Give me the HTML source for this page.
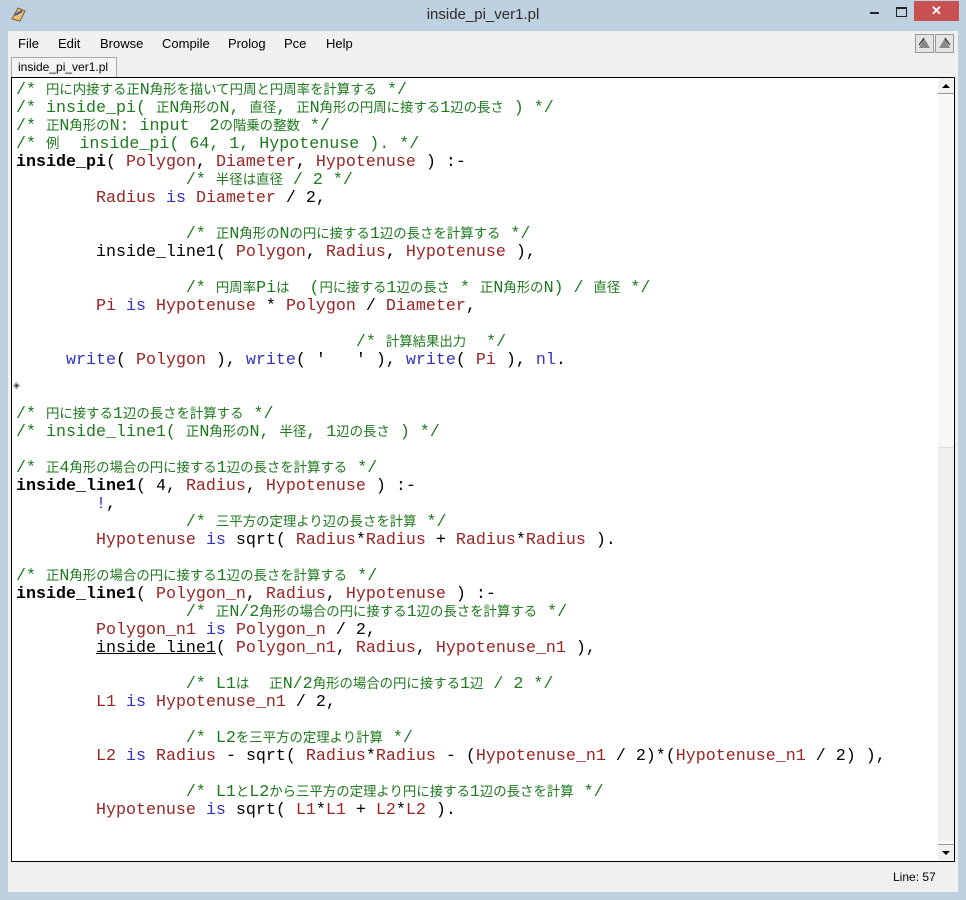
<!DOCTYPE html>
<html><head><meta charset="utf-8">
<style>
body{margin:0;width:966px;height:900px;background:#bfd0e1;position:relative;overflow:hidden;font-family:"Liberation Sans","Noto Sans CJK JP",sans-serif}
.title{position:absolute;left:0;top:6px;width:966px;text-align:center;font-size:15px;color:#2b2b2b}
.client{position:absolute;left:8px;top:31px;width:950px;height:861px;background:#f0f0f0}
.menu{position:absolute;left:8px;top:36px;font-size:13px;color:#000}
.menu span{position:absolute;white-space:nowrap}
.tab{position:absolute;left:11px;top:57px;width:106px;height:20px;border:1px solid #aaa;border-bottom:none;background:#f4f4f4;font-size:12px;line-height:19px;padding-left:6px;box-sizing:border-box}
.ed{position:absolute;left:11px;top:77px;width:944px;height:785px;border:1px solid #000;box-sizing:border-box;background:#fff;overflow:hidden}
.code{position:absolute;left:4px;top:4px;font-family:"Liberation Mono","Noto Sans CJK JP",monospace;font-size:16.67px;line-height:18px;color:#000}
.code div{height:18px;white-space:pre;overflow:visible}
i{font-style:normal;font-family:"Noto Sans CJK JP",sans-serif;font-size:13.4px;line-height:0}
.c{color:#1f7a1f}.v{color:#9a2424}.b{color:#3333bb}.h{font-weight:bold}
.sb{position:absolute;left:926px;top:0;width:16px;height:783px;background:#f7f7f7}
.btn{position:absolute;left:0;width:16px;height:16px;background:#f0f0f0;border-bottom:1px solid #999;box-sizing:border-box}
.thumb{position:absolute;left:0;top:369px;width:16px;height:393px;background:#efefef;border-top:1px solid #ddd}
</style></head><body>
<svg style="position:absolute;left:10px;top:5px" width="18" height="18" viewBox="0 0 18 18"><path d="M2 14 L8 3 L15 6 L10 16 Z" fill="#e8c070" stroke="#806030"/><path d="M5 10 L12 6" stroke="#4050a0" stroke-width="2"/></svg>
<div class="title">inside_pi_ver1.pl</div>
<div style="position:absolute;left:870px;top:12px;width:9px;height:2px;background:#222"></div>
<div style="position:absolute;left:896px;top:7px;width:9px;height:7px;border:1px solid #222;border-top-width:2px"></div>
<div style="position:absolute;left:914px;top:1px;width:45px;height:20px;background:#c75050;color:#fff;text-align:center;font-size:13px;line-height:20px;font-weight:bold">✕</div>
<div class="client"></div>
<div class="menu"><span style="left:10px">File</span><span style="left:50px">Edit</span><span style="left:92px">Browse</span><span style="left:154px">Compile</span><span style="left:220px">Prolog</span><span style="left:276px">Pce</span><span style="left:318px">Help</span></div>
<div style="position:absolute;left:915px;top:34px;width:19px;height:19px;background:#e4e4e4;border:1px solid #999;box-sizing:border-box"><svg width="17" height="17"><path d="M3 13 L8 3 L14 13 Z" fill="#888"/><path d="M3 10 L8 3" stroke="#111"/></svg></div>
<div style="position:absolute;left:935px;top:34px;width:19px;height:19px;background:#e4e4e4;border:1px solid #999;box-sizing:border-box"><svg width="17" height="17"><path d="M3 13 L9 3 L14 13 Z" fill="#888"/><path d="M9 3 L14 10" stroke="#111"/></svg></div>
<div class="tab">inside_pi_ver1.pl</div>
<div class="ed">
<div class="code">
<div><span class="c">/* <i>円に内接する正</i>N<i>角形を描いて円周と円周率を計算する</i> */</span></div>
<div><span class="c">/* inside_pi( <i>正</i>N<i>角形の</i>N, <i>直径</i>, <i>正</i>N<i>角形の円周に接する</i>1<i>辺の長さ</i> ) */</span></div>
<div><span class="c">/* <i>正</i>N<i>角形の</i>N: input  2<i>の階乗の整数</i> */</span></div>
<div><span class="c">/* <i>例</i>  inside_pi( 64, 1, Hypotenuse ). */</span></div>
<div><span class="h">inside_pi</span>( <span class="v">Polygon</span>, <span class="v">Diameter</span>, <span class="v">Hypotenuse</span> ) :-</div>
<div>                 <span class="c">/* <i>半径は直径</i> / 2 */</span></div>
<div>        <span class="v">Radius</span> <span class="b">is</span> <span class="v">Diameter</span> / 2,</div>
<div></div>
<div>                 <span class="c">/* <i>正</i>N<i>角形の</i>N<i>の円に接する</i>1<i>辺の長さを計算する</i> */</span></div>
<div>        inside_line1( <span class="v">Polygon</span>, <span class="v">Radius</span>, <span class="v">Hypotenuse</span> ),</div>
<div></div>
<div>                 <span class="c">/* <i>円周率</i>Pi<i>は</i>  (<i>円に接する</i>1<i>辺の長さ</i> * <i>正</i>N<i>角形の</i>N) / <i>直径</i> */</span></div>
<div>        <span class="v">Pi</span> <span class="b">is</span> <span class="v">Hypotenuse</span> * <span class="v">Polygon</span> / <span class="v">Diameter</span>,</div>
<div></div>
<div>                                  <span class="c">/* <i>計算結果出力</i>  */</span></div>
<div>     <span class="b">write</span>( <span class="v">Polygon</span> ), <span class="b">write</span>( '   ' ), <span class="b">write</span>( <span class="v">Pi</span> ), <span class="b">nl</span>.</div>
<div></div>
<div></div>
<div><span class="c">/* <i>円に接する</i>1<i>辺の長さを計算する</i> */</span></div>
<div><span class="c">/* inside_line1( <i>正</i>N<i>角形の</i>N, <i>半径</i>, 1<i>辺の長さ</i> ) */</span></div>
<div></div>
<div><span class="c">/* <i>正</i>4<i>角形の場合の円に接する</i>1<i>辺の長さを計算する</i> */</span></div>
<div><span class="h">inside_line1</span>( 4, <span class="v">Radius</span>, <span class="v">Hypotenuse</span> ) :-</div>
<div>        <span class="b">!</span>,</div>
<div>                 <span class="c">/* <i>三平方の定理より辺の長さを計算</i> */</span></div>
<div>        <span class="v">Hypotenuse</span> <span class="b">is</span> sqrt( <span class="v">Radius</span>*<span class="v">Radius</span> + <span class="v">Radius</span>*<span class="v">Radius</span> ).</div>
<div></div>
<div><span class="c">/* <i>正</i>N<i>角形の場合の円に接する</i>1<i>辺の長さを計算する</i> */</span></div>
<div><span class="h">inside_line1</span>( <span class="v">Polygon_n</span>, <span class="v">Radius</span>, <span class="v">Hypotenuse</span> ) :-</div>
<div>                 <span class="c">/* <i>正</i>N/2<i>角形の場合の円に接する</i>1<i>辺の長さを計算する</i> */</span></div>
<div>        <span class="v">Polygon_n1</span> <span class="b">is</span> <span class="v">Polygon_n</span> / 2,</div>
<div>        <u>inside_line1</u>( <span class="v">Polygon_n1</span>, <span class="v">Radius</span>, <span class="v">Hypotenuse_n1</span> ),</div>
<div></div>
<div>                 <span class="c">/* L1<i>は</i>  <i>正</i>N/2<i>角形の場合の円に接する</i>1<i>辺</i> / 2 */</span></div>
<div>        <span class="v">L1</span> <span class="b">is</span> <span class="v">Hypotenuse_n1</span> / 2,</div>
<div></div>
<div>                 <span class="c">/* L2<i>を三平方の定理より計算</i> */</span></div>
<div>        <span class="v">L2</span> <span class="b">is</span> <span class="v">Radius</span> - sqrt( <span class="v">Radius</span>*<span class="v">Radius</span> - (<span class="v">Hypotenuse_n1</span> / 2)*(<span class="v">Hypotenuse_n1</span> / 2) ),</div>
<div></div>
<div>                 <span class="c">/* L1<i>と</i>L2<i>から三平方の定理より円に接する</i>1<i>辺の長さを計算</i> */</span></div>
<div>        <span class="v">Hypotenuse</span> <span class="b">is</span> sqrt( <span class="v">L1</span>*<span class="v">L1</span> + <span class="v">L2</span>*<span class="v">L2</span> ).</div>
</div>
<div style="position:absolute;left:1px;top:302px;font-size:9px;color:#444">◈</div>
<div class="sb">
<div class="btn" style="top:0"><svg width="16" height="16"><path d="M4 10 L8 6 L12 10 Z" fill="#000"/></svg></div>
<div class="thumb"></div>
<div class="btn" style="top:766px;border-top:1px solid #999;border-bottom:none"><svg width="16" height="16"><path d="M4 6 L8 10 L12 6 Z" fill="#000"/></svg></div>
</div>
</div>
<div style="position:absolute;left:893px;top:870px;font-size:12px">Line: 57</div>
</body></html>
